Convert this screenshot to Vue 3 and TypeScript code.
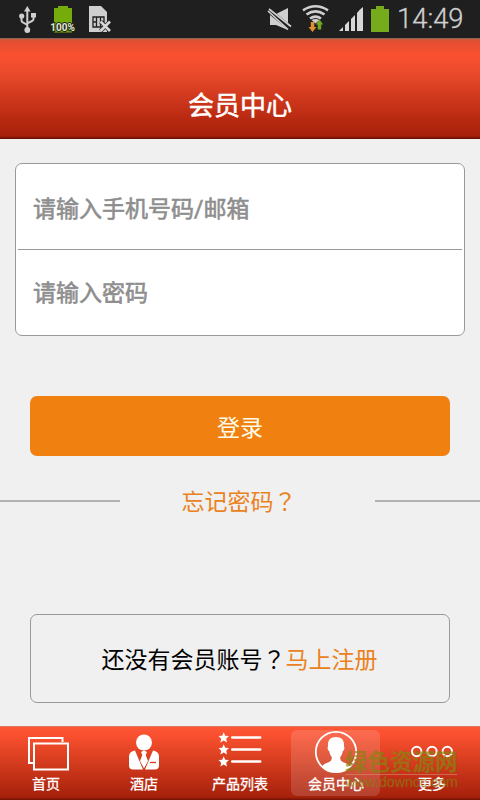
<script setup lang="ts">
import { ref } from 'vue'

type TabId = 'home' | 'hotel' | 'products' | 'member' | 'more'

const tabs: { id: TabId; label: string }[] = [
  { id: 'home', label: '首页' },
  { id: 'hotel', label: '酒店' },
  { id: 'products', label: '产品列表' },
  { id: 'member', label: '会员中心' },
  { id: 'more', label: '更多' },
]

const active = ref<TabId>('member')
const account = ref('')
const password = ref('')
</script>

<template>
  <div class="screen">
    <div class="status">
      <svg class="status-left" viewBox="0 0 120 38" width="120" height="38">
        <g stroke="#cfcfcf" fill="none" stroke-width="2">
          <path d="M27.3 10v20M21.500 17v3.500q0 1.500 1.500 2l4.300 2.500M33.500 16v3q0 1.500-1.500 2l-4.700 2.300" />
        </g>
        <path d="M27.300 6l3.300 5.500h-6.600zM31 13h5v4.500h-5z" fill="#cfcfcf" />
        <circle cx="21.700" cy="16" r="2.600" fill="#cfcfcf" />
        <circle cx="27.300" cy="30" r="2.900" fill="#cfcfcf" />
        <path d="M54 8h4V6h10v2h4v24.500H54z" fill="#76ab0c" />
        <text x="62.500" y="30.800" class="charge">100%</text>
        <path d="M89 6h12l6 6v20H89z" fill="#cfcfcf" />
        <path d="M93 17h11v10H93zM96.500 17v10M100.500 17v10M93 22h3.500M100.500 22h4" stroke="#1f1f1f" stroke-width="1.300" fill="none" />
        <path d="M100.500 21.500l9.500 9.500M110 21.500l-9.500 9.500" stroke="#1f1f1f" stroke-width="4" />
        <path d="M100.500 21.500l9.500 9.500M110 21.500l-9.500 9.500" stroke="#d8d8d8" stroke-width="2.700" />
      </svg>
      <div class="status-right">
        <svg viewBox="260 0 130 38" width="130" height="38">
          <path d="M270 14h6l12-6v22l-12-5h-6z" fill="#cfcfcf" />
          <path d="M268 10l22 18" stroke="#1f1f1f" stroke-width="5" />
          <path d="M268 11l20 18.500M269 9l22 17.500" stroke="#cfcfcf" stroke-width="1.700" />
          <g fill="none" stroke="#cfcfcf" stroke-width="2.600">
            <path d="M303 10.300q12.500-8 25 0M306.500 14.500q9-6.200 18 0M310 18.500q5.500-3.800 11 0" />
          </g>
          <path d="M311.500 20q4-2 8 0l-4 3.500z" fill="#cfcfcf" />
          <path d="M310.800 22h3.500v5h2.200l-4 5-4-5h2.300z" fill="#e09032" />
          <path d="M317.700 29.500h3.500v-5h2l-3.700-5-3.700 5h1.900z" fill="#74a81f" />
          <path d="M339 31l4-4v4zM345 25l4-4v10h-4zM351 19l4-4v16h-4zM357 13l3-3.500V31h-3zM360 9.500l3-2.500v24h-3z" fill="#d8d8d8" />
          <path d="M350 20v11M356 14v17" stroke="#1f1f1f" stroke-width="2" />
          <path d="M371 9h5V6h8v3h5v23h-18z" fill="#76ab1b" />
        </svg>
        <span class="clock">14:49</span>
      </div>
    </div>

    <header class="header"><h1>会员中心</h1></header>

    <main class="content">
      <form class="fields" @submit.prevent>
        <input v-model="account" type="text" placeholder="请输入手机号码/邮箱" />
        <div class="divider"></div>
        <input v-model="password" type="password" placeholder="请输入密码" />
      </form>
      <button class="login" type="button">登录</button>
      <div class="forgot">
        <span class="rule left"></span>
        <a>忘记密码<span class="mark">？</span></a>
        <span class="rule right"></span>
      </div>
      <div class="register">
        <p>还没有会员账号<span class="mark">？</span><a>马上注册</a></p>
      </div>
    </main>

    <nav class="tabs">
      <button
        v-for="tab in tabs"
        :key="tab.id"
        type="button"
        class="tab"
        :class="[tab.id, { active: tab.id === active }]"
        @click="active = tab.id"
      >
        <svg v-if="tab.id === 'home'" width="48" height="44" viewBox="0 0 48 44">
          <path d="M38.500 12V8H5v25h4M10 13.500h34v26H10z" fill="none" stroke="#fff" stroke-width="2" />
        </svg>
        <svg v-else-if="tab.id === 'hotel'" width="48" height="44" viewBox="0 0 48 44">
          <g fill="#fff">
            <circle cx="24" cy="12.500" r="8" />
            <path d="M15 20.500l8 19h-10q-4 0-4-4v-9q0-5 6-6zM33 20.500l-8 19h10q4 0 4-4v-9q0-5-6-6zM21 22l3-1.500 3 1.500-1.300 3L28 31l-4 7.500L20 31l2.300-6z" />
          </g>
          <path d="M30 32.500h6" stroke="#d33c20" stroke-width="1.300" />
        </svg>
        <svg v-else-if="tab.id === 'products'" width="48" height="44" viewBox="0 0 48 44">
          <g v-for="row in [7.5, 19.500, 31.500]" :key="row" :transform="`translate(7.700 ${row})`">
            <path d="M0-5.200L1.500-1.700 5.200-1.400 2.500 1.200 3.300 5 0 3 -3.300 5 -2.500 1.200-5.200-1.400-1.500-1.700z" fill="#fff" />
            <path d="M8.500 0h28" stroke="#fff" stroke-width="2.400" stroke-linecap="round" />
          </g>
        </svg>
        <svg v-else-if="tab.id === 'member'" width="48" height="44" viewBox="0 0 48 44">
          <circle cx="24" cy="22" r="20.200" fill="none" stroke="#fff" stroke-width="1.800" />
          <path d="M24 7c-6 0-8.500 3.500-8 9.500-1 1.500 0 4 1.300 4.800.4 3 1.300 4.500 2.500 5.700 0 4-1.500 4.700-5 6-2 .8-3.500 1.500-4.500 3.200A19 19 0 0 0 24 42a19 19 0 0 0 13.700-5.800c-1-1.700-2.500-2.400-4.500-3.200-3.500-1.300-5-2-5-6 1.200-1.200 2.100-2.700 2.500-5.700 1.300-.8 2.300-3.300 1.300-4.800.5-6-2-9.500-8-9.500z" fill="#fff" />
        </svg>
        <svg v-else width="48" height="44" viewBox="0 0 48 44">
          <g fill="none" stroke="#fff" stroke-width="2">
            <circle cx="8.700" cy="21.500" r="4.700" />
            <circle cx="24" cy="21.500" r="4.700" />
            <circle cx="39.300" cy="21.500" r="4.700" />
          </g>
        </svg>
        <span>{{ tab.label }}</span>
      </button>
      <div class="watermark">
        <strong>绿色资源网</strong>
        <span>www.downcc.com</span>
      </div>
    </nav>
  </div>
</template>

<style>
body {
  margin: 0;
}
</style>

<style scoped>
.screen {
  width: 480px;
  height: 800px;
  display: flex;
  flex-direction: column;
  overflow: hidden;
  background: #f0f0f0;
  font-family: Roboto, "Noto Sans CJK SC", sans-serif;
}
.status {
  height: 38px;
  flex: none;
  display: flex;
  justify-content: space-between;
  background: #1f1f1f;
}
.charge {
  font: bold 10px Roboto, sans-serif;
  text-anchor: middle;
  fill: #e2e6da;
  stroke: #20290e;
  stroke-width: 2px;
  paint-order: stroke;
}
.status-right {
  display: flex;
  width: 220px;
}
.clock {
  padding-left: 7px;
  font-size: 27.400px;
  line-height: 38px;
  color: #cfcfcf;
  font-weight: 300;
  -webkit-text-stroke: 0.3px #cfcfcf;
}
.header {
  height: 101px;
  flex: none;
  box-sizing: border-box;
  padding-top: 49px;
  border-top: 1px solid #8d6257;
  border-bottom: 1px solid #6c1006;
  background: linear-gradient(#c65b43 0, #e14e31 2px, #fa5130 16px, #ec4b2c 32px, #b62810 82px, #a6210b 97px, #7e1507 99px);
}
h1 {
  margin: 0;
  text-align: center;
  color: #fff;
  font-size: 26px;
  line-height: 36px;
  font-weight: 400;
  -webkit-text-stroke: 0.5px #fff;
}
.content {
  flex: 1;
  display: flex;
  flex-direction: column;
}
.fields {
  box-sizing: border-box;
  height: 173px;
  margin: 24px 15px 0;
  padding: 0 2px;
  border: 1px solid #999;
  border-radius: 7px;
  background: #fff;
  display: flex;
  flex-direction: column;
}
.fields input {
  height: 85px;
  box-sizing: border-box;
  padding: 5px 15px 0;
  border: 0;
  outline: 0;
  background: transparent;
  font: 400 23px Roboto, "Noto Sans CJK SC", sans-serif;
}
.fields input:last-child {
  padding-top: 2px;
}
.fields input::placeholder {
  color: #8e8e8e;
  -webkit-text-stroke: 0.6px #8e8e8e;
}
.divider {
  height: 1px;
  background: #999;
}
.login {
  height: 60px;
  margin: 60px 30px 0;
  padding: 0 0 1px;
  border: 0;
  border-radius: 7px;
  background: #f08010;
  color: #fffbe8;
  font: 23px "Noto Sans CJK SC", sans-serif;
}
.forgot {
  height: 34px;
  margin-top: 28px;
  display: flex;
  align-items: center;
  justify-content: space-between;
}
.rule {
  height: 2px;
  background: #b1b1b1;
}
.rule.left {
  width: 120px;
}
.rule.right {
  width: 105px;
}
.forgot a {
  margin-right: 17px;
  padding-top: 3px;
}
.forgot a,
.register {
  font-size: 23px;
  line-height: 34px;
}
.forgot a,
.register a {
  color: #ea8222;
}
.mark {
  font-family: "Noto Sans CJK TC", sans-serif;
  line-height: 1;
}
.register {
  height: 89px;
  box-sizing: border-box;
  margin: 96px 30px 0;
  padding: 4px 1px 0 0;
  border: 1px solid #999;
  border-radius: 7px;
  display: flex;
  align-items: center;
  justify-content: center;
  color: #000;
}
.register p {
  margin: 0;
}
.tabs {
  position: relative;
  height: 74px;
  flex: none;
  box-sizing: border-box;
  display: flex;
  border-top: 1px solid #e57862;
  border-bottom: 1px solid #771407;
  background: linear-gradient(#fb5736 0, #fb5030 8px, #ec4928 18px, #a6210b 70px, #861708 72px);
}
.tab {
  width: 96px;
  height: 66px;
  margin-top: 3px;
  padding: 0;
  border: 0;
  background: none;
  color: #fff;
  display: flex;
  flex-direction: column;
  align-items: center;
  font: 14px/18px "Noto Sans CJK SC", sans-serif;
}
.tab span {
  -webkit-text-stroke: 0.3px #fff;
}
.tab.home span {
  padding-right: 4px;
}
.tab.active {
  width: 89px;
  margin-left: 3px;
  margin-right: 4px;
  border-radius: 6px;
  background: rgba(255, 255, 255, 0.14);
}
.tab.active span {
  padding-left: 1px;
}
.tab svg {
  display: block;
  flex: none;
}
.watermark {
  position: absolute;
  left: 345px;
  top: 19px;
  width: 112px;
  display: flex;
  flex-direction: column;
  color: #84860f;
  opacity: 0.68;
  pointer-events: none;
  white-space: nowrap;
}
.watermark strong {
  font: bold 22.500px/28px "Noto Sans CJK SC", sans-serif;
  border-bottom: 1px solid #d9826a;
}
.watermark span {
  font: 14.200px/14px "Liberation Sans", sans-serif;
}
</style>
